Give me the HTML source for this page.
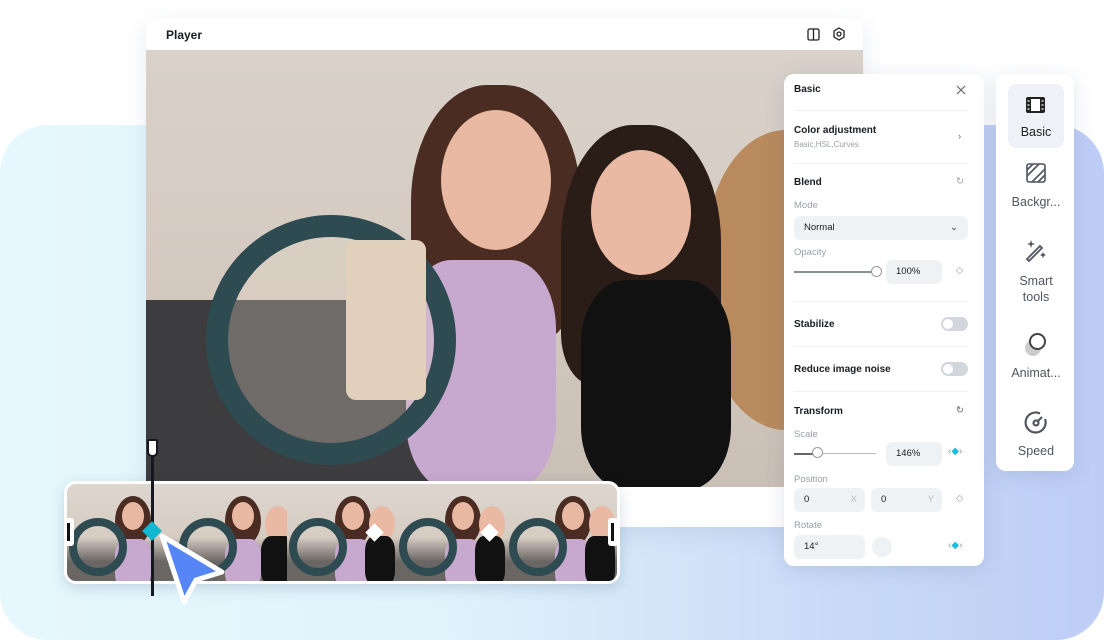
<!DOCTYPE html>
<html><head><meta charset="utf-8"><style>
*{box-sizing:border-box;margin:0;padding:0}
body{width:1104px;height:640px;overflow:hidden;background:#fff;font-family:"Liberation Sans",sans-serif;position:relative;color:#1a1c22}
.bg{position:absolute;left:0;top:125px;width:1104px;height:515px;border-radius:48px;background:linear-gradient(90deg,#e6f8fd 0%,#dff3fb 40%,#c9dbf7 75%,#bdcdf6 100%)}
.player{position:absolute;left:146px;top:18px;width:717px;height:509px;background:#fff;border-radius:12px;box-shadow:0 6px 24px rgba(80,100,140,.12);overflow:hidden}
.player h1{position:absolute;left:20px;top:10px;font-size:12px;font-weight:bold}
.photo{position:absolute;left:0;top:32px;width:717px;height:437px;background:linear-gradient(180deg,#d9d2ca 0%,#d4c9bf 55%,#c9bfb5 100%);overflow:hidden}
.b{position:absolute;border-radius:50%}
.panel{position:absolute;left:784px;top:74px;width:200px;height:492px;background:#fff;border-radius:10px;box-shadow:0 4px 20px rgba(60,80,120,.15);font-size:10px}
.panel .t{position:absolute;font-weight:bold;font-size:10px}
.panel .g{position:absolute;color:#9aa0a8;font-size:9.5px}
.panel .hr{position:absolute;left:10px;width:174px;height:1px;background:#eef0f3}
.inp{position:absolute;background:#eff2f5;border-radius:6px;font-size:9.5px;padding-left:10px;line-height:24px}
.tog{position:absolute;left:157px;width:27px;height:14px;border-radius:7px;background:#d3d7dd}
.tog:after{content:"";position:absolute;left:2px;top:2px;width:10px;height:10px;border-radius:50%;background:#fff}
.side{position:absolute;left:996px;top:74px;width:78px;height:397px;background:#fff;border-radius:10px;box-shadow:0 4px 20px rgba(60,80,120,.15);text-align:center;color:#50555e;font-size:12.5px}
.side .it{position:absolute;left:12px;width:56px;text-align:center}
.strip{position:absolute;left:64px;top:481px;width:556px;height:103px;border:3px solid #fff;border-radius:12px;overflow:hidden;box-shadow:0 4px 14px rgba(40,60,100,.18);display:flex;background:#ccc}
.fr{flex:1;height:100%;position:relative;overflow:hidden;background:linear-gradient(180deg,#ddd6cf 0%,#d6ccc2 55%,#6a6663 80%)}
.fr i{position:absolute;border-radius:50%;display:block}
</style></head><body>
<div class="bg"></div>
<div class="player"><h1>Player</h1>
<svg style="position:absolute;left:661px;top:10px" width="13" height="13" viewBox="0 0 13 13" fill="none" stroke="#222" stroke-width="1.3"><rect x="1" y="1" width="11" height="11" rx="1.5"/><path d="M6.5 1v11"/></svg>
<svg style="position:absolute;left:686px;top:9px" width="14" height="14" viewBox="0 0 14 14" fill="none" stroke="#222" stroke-width="1.3"><path d="M7 1l5 3v6l-5 3-5-3V4z"/><circle cx="7" cy="7" r="2"/></svg>
<div class="photo">
<div class="b" style="left:-40px;top:250px;width:420px;height:260px;border-radius:30px;background:#3d3d3f"></div>
<div class="b" style="left:560px;top:80px;width:200px;height:300px;background:#b98a5e;border-radius:40%"></div>
<div class="b" style="left:265px;top:35px;width:170px;height:260px;background:#4a2c22;border-radius:45% 45% 30% 30%"></div>
<div class="b" style="left:295px;top:60px;width:110px;height:140px;background:#e8b8a2"></div>
<div class="b" style="left:415px;top:75px;width:160px;height:260px;background:#2a1c16;border-radius:45% 45% 20% 20%"></div>
<div class="b" style="left:445px;top:100px;width:100px;height:125px;background:#eab9a3"></div>
<div class="b" style="left:435px;top:230px;width:150px;height:210px;background:#111;border-radius:30%"></div>
<div class="b" style="left:260px;top:210px;width:150px;height:230px;background:#c7a8cf;border-radius:30%"></div>
<div class="b" style="left:60px;top:165px;width:250px;height:250px;border:22px solid #2e4b52;background:rgba(230,215,200,.3)"></div>
<div class="b" style="left:200px;top:190px;width:80px;height:160px;background:#e0d0bc;border-radius:10px"></div>
</div></div>
<div class="panel">
<div class="t" style="left:10px;top:10px">Basic</div>
<svg style="position:absolute;left:172px;top:11px" width="10" height="10" stroke="#666" stroke-width="1.2"><path d="M1 1l8 8M9 1L1 9"/></svg>
<div class="hr" style="top:36px"></div>
<div class="t" style="left:10px;top:51px">Color adjustment</div>
<div class="g" style="left:10px;top:66px;font-size:8px">Basic,HSL,Curves</div>
<div class="g" style="left:174px;top:57px;color:#666">›</div>
<div class="hr" style="top:89px"></div>
<div class="t" style="left:10px;top:103px">Blend</div>
<div class="g" style="left:172px;top:102px">↻</div>
<div class="g" style="left:10px;top:126px">Mode</div>
<div class="inp" style="left:10px;top:142px;width:174px">Normal<span style="position:absolute;right:10px;color:#444">⌄</span></div>
<div class="g" style="left:10px;top:173px">Opacity</div>
<div style="position:absolute;left:10px;top:197px;width:82px;height:1.5px;background:#8a9099"></div>
<div class="b" style="left:87px;top:192px;width:11px;height:11px;background:#fff;border:1px solid #999"></div>
<div class="inp" style="left:102px;top:186px;width:56px">100%</div>
<div class="g" style="left:172px;top:191px">◇</div>
<div class="hr" style="top:227px"></div>
<div class="t" style="left:10px;top:245px">Stabilize</div><div class="tog" style="top:243px"></div>
<div class="hr" style="top:272px"></div>
<div class="t" style="left:10px;top:290px">Reduce image noise</div><div class="tog" style="top:288px"></div>
<div class="hr" style="top:317px"></div>
<div class="t" style="left:10px;top:332px">Transform</div>
<div class="g" style="left:172px;top:331px;color:#666">↻</div>
<div class="g" style="left:10px;top:355px">Scale</div>
<div style="position:absolute;left:10px;top:379px;width:82px;height:1px;background:#bbb"></div>
<div style="position:absolute;left:10px;top:379px;width:24px;height:1.5px;background:#666"></div>
<div class="b" style="left:28px;top:373px;width:11px;height:11px;background:#fff;border:1px solid #999"></div>
<div class="inp" style="left:102px;top:368px;width:56px">146%</div>
<div style="position:absolute;left:164px;top:372px;color:#999;font-size:10px">‹<span style="color:#12c1dc">◆</span>›</div>
<div class="g" style="left:10px;top:400px">Position</div>
<div class="inp" style="left:10px;top:414px;width:71px">0<span style="position:absolute;right:8px;color:#bbb">X</span></div>
<div class="inp" style="left:87px;top:414px;width:71px">0<span style="position:absolute;right:8px;color:#bbb">Y</span></div>
<div class="g" style="left:172px;top:419px">◇</div>
<div class="g" style="left:10px;top:446px">Rotate</div>
<div class="inp" style="left:10px;top:461px;width:71px">14°</div>
<div class="b" style="left:88px;top:463px;width:20px;height:20px;background:#eff2f5"></div>
<div style="position:absolute;left:164px;top:466px;color:#999;font-size:10px">‹<span style="color:#12c1dc">◆</span>›</div>
</div>
<div class="side">
<div class="it" style="top:10px;height:64px;background:#eef1f5;border-radius:8px"></div>
<svg style="position:absolute;left:29px;top:22px" width="21" height="18" viewBox="0 0 21 18"><rect x="1" y="1" width="19" height="16" rx="2" fill="#222"/><rect x="6" y="3" width="9" height="12" fill="#fff"/><path d="M2.5 5h2M2.5 9h2M2.5 13h2M16.5 5h2M16.5 9h2M16.5 13h2" stroke="#fff" stroke-width="1.3"/></svg>
<div class="it" style="top:51px;color:#222">Basic</div>
<svg style="position:absolute;left:30px;top:89px" width="20" height="20" fill="none" stroke="#50555e" stroke-width="1.6"><rect x="1" y="1" width="18" height="18" rx="2"/><path d="M1 13L13 1M6 19L19 6M1 7l6-6M12 19l7-7"/></svg>
<div class="it" style="top:121px;left:6px;width:68px">Backgr...</div>
<svg style="position:absolute;left:28px;top:164px" width="24" height="24" fill="none" stroke="#50555e" stroke-width="1.8"><path d="M3 21L16 8l2 2L5 23z"/><path d="M7 2l1 3 3 1-3 1-1 3-1-3-3-1 3-1zM19 14l1 2 2 1-2 1-1 2-1-2-2-1 2-1z" fill="#50555e" stroke="none"/></svg>
<div class="it" style="top:199px;line-height:16px">Smart<br>tools</div>
<div class="b" style="left:29px;top:266px;width:16px;height:16px;background:#ccc"></div>
<div class="b" style="left:33px;top:259px;width:17px;height:17px;border:2.5px solid #444;background:#fff"></div>
<div class="it" style="top:292px">Animat...</div>
<svg style="position:absolute;left:28px;top:336px" width="24" height="24" fill="none" stroke="#50555e" stroke-width="2.2"><path d="M16 3.5A10 10 0 1 0 21 9"/><circle cx="12" cy="13" r="2.5"/><path d="M14 11l4-4"/></svg>
<div class="it" style="top:370px">Speed</div>
</div>
<div class="strip">
<div class="fr"><i style="left:48px;top:12px;width:36px;height:50px;background:#4a2c22"></i><i style="left:55px;top:18px;width:22px;height:28px;background:#e8b8a2"></i><i style="left:48px;top:55px;width:36px;height:50px;background:#c7a8cf;border-radius:30%"></i><i style="left:2px;top:34px;width:58px;height:58px;border:8px solid #2e4b52"></i></div>
<div class="fr"><i style="left:48px;top:12px;width:36px;height:50px;background:#4a2c22"></i><i style="left:55px;top:18px;width:22px;height:28px;background:#e8b8a2"></i><i style="left:48px;top:55px;width:36px;height:50px;background:#c7a8cf;border-radius:30%"></i><i style="left:88px;top:22px;width:26px;height:36px;background:#eab9a3"></i><i style="left:84px;top:52px;width:34px;height:50px;background:#111;border-radius:30%"></i><i style="left:2px;top:34px;width:58px;height:58px;border:8px solid #2e4b52"></i></div>
<div class="fr"><i style="left:48px;top:12px;width:36px;height:50px;background:#4a2c22"></i><i style="left:55px;top:18px;width:22px;height:28px;background:#e8b8a2"></i><i style="left:48px;top:55px;width:36px;height:50px;background:#c7a8cf;border-radius:30%"></i><i style="left:82px;top:22px;width:26px;height:36px;background:#eab9a3"></i><i style="left:78px;top:52px;width:30px;height:50px;background:#111;border-radius:30%"></i><i style="left:2px;top:34px;width:58px;height:58px;border:8px solid #2e4b52"></i></div>
<div class="fr"><i style="left:48px;top:12px;width:36px;height:50px;background:#4a2c22"></i><i style="left:55px;top:18px;width:22px;height:28px;background:#e8b8a2"></i><i style="left:48px;top:55px;width:36px;height:50px;background:#c7a8cf;border-radius:30%"></i><i style="left:82px;top:22px;width:26px;height:36px;background:#eab9a3"></i><i style="left:78px;top:52px;width:30px;height:50px;background:#111;border-radius:30%"></i><i style="left:2px;top:34px;width:58px;height:58px;border:8px solid #2e4b52"></i></div>
<div class="fr"><i style="left:48px;top:12px;width:36px;height:50px;background:#4a2c22"></i><i style="left:55px;top:18px;width:22px;height:28px;background:#e8b8a2"></i><i style="left:48px;top:55px;width:36px;height:50px;background:#c7a8cf;border-radius:30%"></i><i style="left:82px;top:22px;width:26px;height:36px;background:#eab9a3"></i><i style="left:78px;top:52px;width:30px;height:50px;background:#111;border-radius:30%"></i><i style="left:2px;top:34px;width:58px;height:58px;border:8px solid #2e4b52"></i></div>
</div>
<div style="position:absolute;left:151px;top:440px;width:3px;height:156px;background:#151820"></div>
<div style="position:absolute;left:147px;top:439px;width:11px;height:18px;background:#fff;border:2px solid #151820;border-radius:2px 2px 5px 5px"></div>
<div style="position:absolute;left:145px;top:524px;width:14px;height:14px;background:#12b8cf;transform:rotate(45deg)"></div>
<div style="position:absolute;left:368px;top:526px;width:13px;height:13px;background:#fff;transform:rotate(45deg)"></div>
<div style="position:absolute;left:483px;top:526px;width:13px;height:13px;background:#fff;transform:rotate(45deg)"></div>
<div style="position:absolute;left:64px;top:518px;width:10px;height:28px;background:#fff;border-radius:3px"><div style="margin:5px 3px;width:3px;height:18px;background:#111"></div></div>
<div style="position:absolute;left:608px;top:518px;width:10px;height:28px;background:#fff;border-radius:3px"><div style="margin:5px 3px;width:3px;height:18px;background:#111"></div></div>
<svg style="position:absolute;left:152px;top:530px" width="76" height="76" viewBox="0 0 76 76"><path d="M10 6L70 42 44 50 32 72z" fill="#5686f5" stroke="#fff" stroke-width="5" stroke-linejoin="round"/></svg>
</body></html>
